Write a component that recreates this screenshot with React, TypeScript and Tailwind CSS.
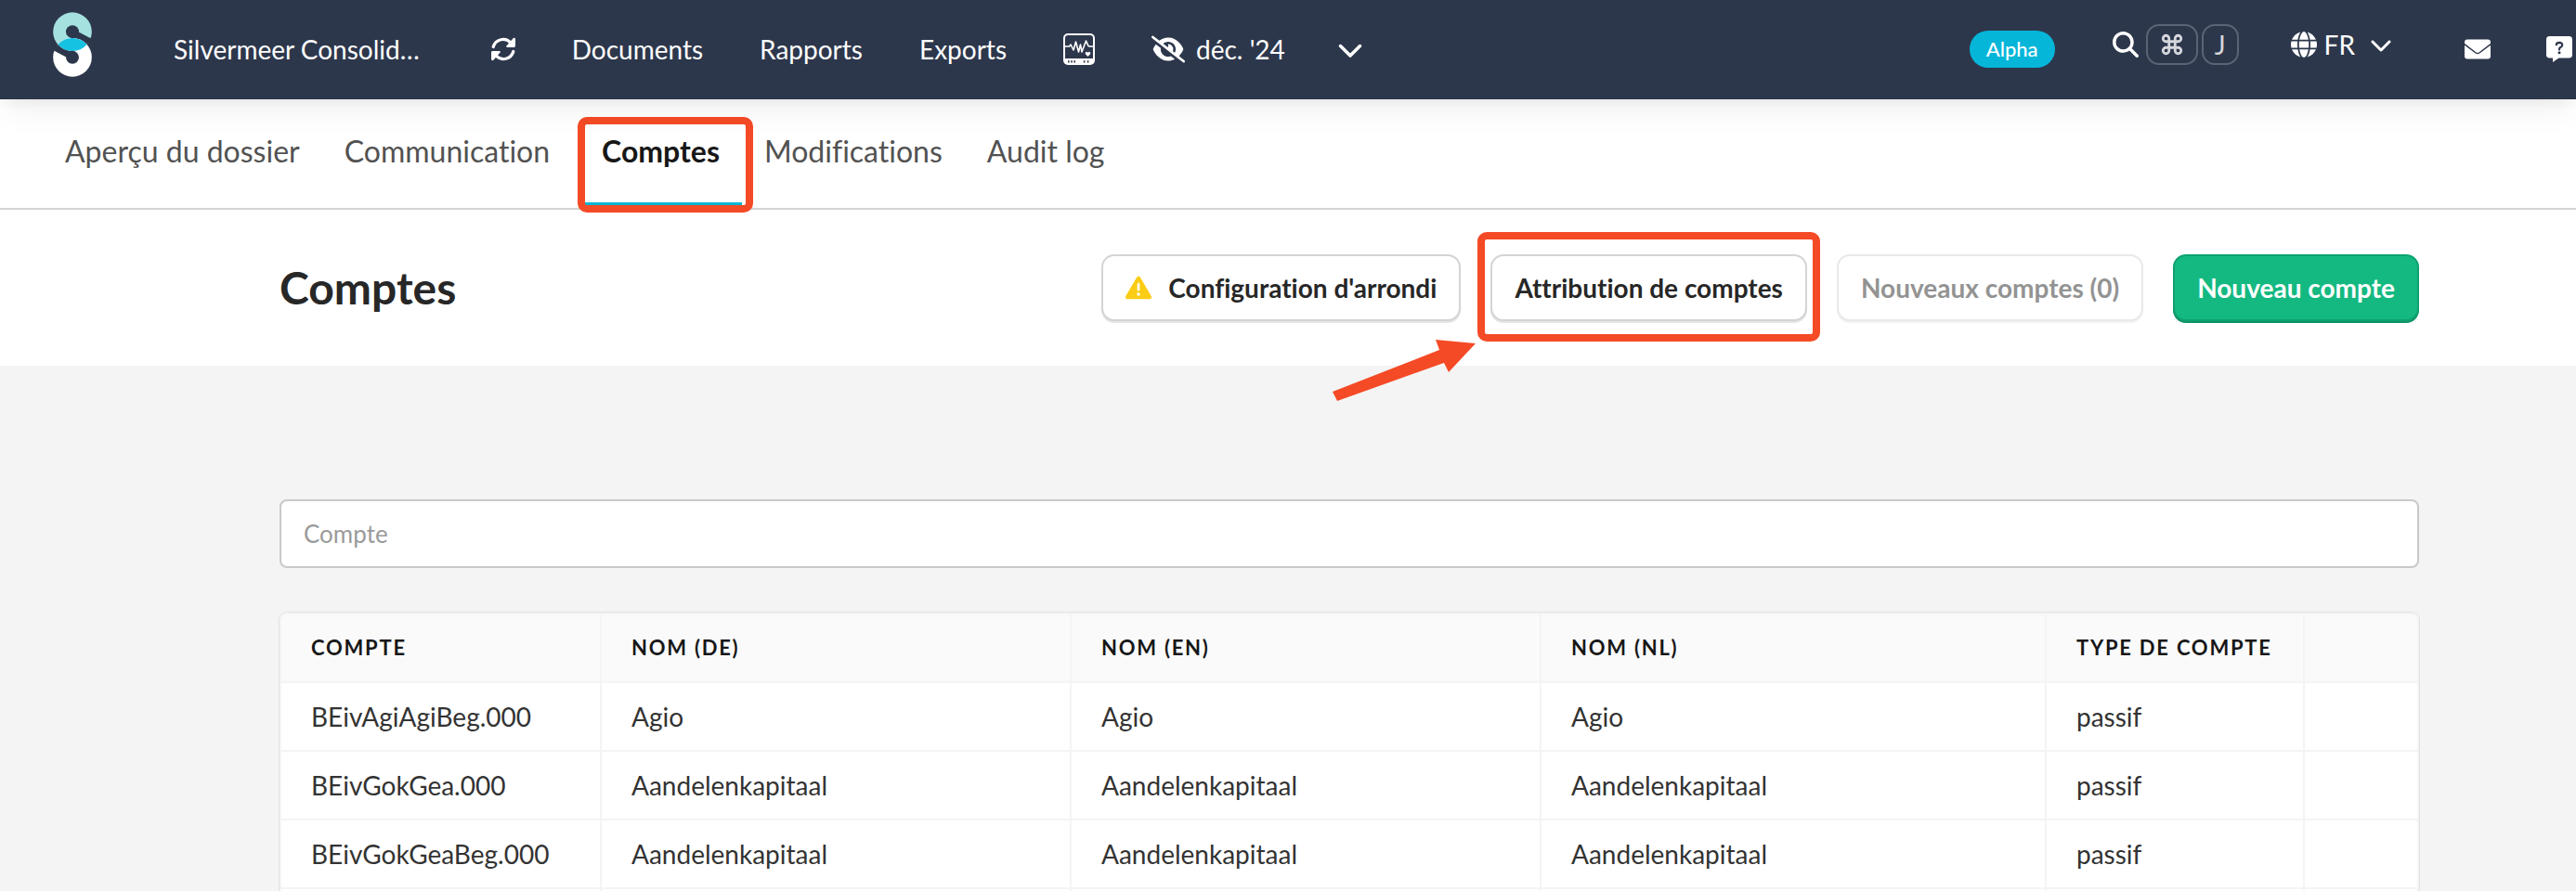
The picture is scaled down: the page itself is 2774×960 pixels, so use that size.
import type { ReactNode } from 'react'
import clsx from 'clsx'
import { Command } from 'lucide-react'
import { FaChevronDown, FaEyeSlash, FaGlobe, FaMagnifyingGlass, FaTriangleExclamation } from 'react-icons/fa6'

const tabs = ['Aperçu du dossier', 'Communication', 'Comptes', 'Modifications', 'Audit log']

const columns = [
  { label: 'Compte', width: 'w-[345px]' },
  { label: 'Nom (de)', width: 'w-[506px]' },
  { label: 'Nom (en)', width: 'w-[506px]' },
  { label: 'Nom (nl)', width: 'w-[544px]' },
  { label: 'Type de compte', width: 'w-[278px]' },
  { label: '', width: 'w-[121px]' },
]

const rows = [
  ['BEivAgiAgiBeg.000', 'Agio', 'Agio', 'Agio', 'passif', ''],
  ['BEivGokGea.000', 'Aandelenkapitaal', 'Aandelenkapitaal', 'Aandelenkapitaal', 'passif', ''],
  ['BEivGokGeaBeg.000', 'Aandelenkapitaal', 'Aandelenkapitaal', 'Aandelenkapitaal', 'passif', ''],
  ['', '', '', '', '', ''],
]

function Logo() {
  return (
    <svg viewBox="81 39 126 209" className="h-[70px] w-[42px]" aria-hidden="true">
      <circle cx="144" cy="102" r="62.5" fill="#a5e1de" />
      <path d="M160 101 L208 126 L190.7 143.5 A62.5 62.5 0 0 0 144 122.5 Z" fill="#2d374c" />
      <circle cx="144" cy="185" r="62.5" fill="#fff" />
      <path d="M128 186 L80 161 L97.3 143.5 A62.5 62.5 0 0 0 144 164.5 Z" fill="#2d374c" />
      <path d="M97.3 143.5 A62.5 62.5 0 0 1 190.7 143.5 A62.5 62.5 0 0 1 97.3 143.5 Z" fill="#15c2e2" />
      <circle cx="144" cy="102" r="21" fill="#2d374c" />
      <circle cx="144" cy="185" r="21" fill="#2d374c" />
    </svg>
  )
}

function RefreshIcon() {
  return (
    <svg viewBox="0 0 26 26" className="h-[26px] w-[26px]" aria-hidden="true">
      <g fill="none" stroke="#fff" strokeWidth="3.2" strokeLinecap="round" strokeLinejoin="round">
        <path d="M2.2 10.5 A11 11 0 0 1 21 6.2" />
        <path d="M23.8 15.5 A11 11 0 0 1 5 19.8" />
      </g>
      <g fill="#fff">
        <path d="M24.5 .8 Q26 .8 26 2.2 V9.6 Q26 11 24.6 11 H17.2 Q15.4 10.8 16.4 9.4 L23.4 1.4 Z" />
        <path d="M1.5 25.2 Q0 25.2 0 23.8 V16.4 Q0 15 1.4 15 H8.8 Q10.6 15.2 9.6 16.6 L2.6 24.6 Z" />
      </g>
    </svg>
  )
}

function MonitorIcon() {
  return (
    <svg viewBox="0 0 34 34" className="h-[34px] w-[34px]" aria-hidden="true">
      <rect x="1" y="1" width="32" height="32" rx="4" fill="none" stroke="#fff" strokeWidth="2" />
      <path d="M1 27 H33 V30 Q33 33 30 33 H4 Q1 33 1 30 Z" fill="#fff" />
      <path d="M2 14 H6.5 L8 12 L11 18 L13.5 9 L16.5 20 L18.5 12 L20 20 L24.5 8 L27 13.5 L28.5 14 H32" fill="none" stroke="#fff" strokeWidth="1.6" strokeLinejoin="round" />
      <path d="M26.5 25 L23.9 22.3 Q23 20.4 24.8 19.9 Q26 19.7 26.5 20.9 Q27 19.7 28.2 19.9 Q30 20.4 29.1 22.3 Z" fill="#fff" />
      <path d="M5.8 29.2 V31.4 M9 29.2 V31.4 M12.2 29.2 V31.4 M22.6 29.2 V31.4 M26.6 29.2 V31.4" stroke="#2d374c" strokeWidth="1.6" />
    </svg>
  )
}

function EnvelopeIcon() {
  return (
    <svg viewBox="0 0 28 22" className="h-[22px] w-7" aria-hidden="true">
      <rect y=".5" width="28" height="21" rx="3" fill="#fff" />
      <path d="M-1 5 L12.2 15 Q14 16.2 15.8 15 L29 5" fill="none" stroke="#2d374c" strokeWidth="1.5" />
    </svg>
  )
}

function HelpIcon() {
  return (
    <svg viewBox="0 0 28 28" className="h-7 w-7" aria-hidden="true">
      <path d="M3.5 0 H24.5 Q28 0 28 3.5 V20 Q28 23.4 24.5 23.4 H13.5 L7 28 V23.4 H3.5 Q0 23.4 0 20 V3.5 Q0 0 3.5 0 Z" fill="#fff" />
      <path d="M10.8 9.2 Q11.2 6.8 14 6.8 Q17.3 6.9 17.2 9.6 Q17 11.2 15.2 12 Q14 12.6 14 14.4" fill="none" stroke="#2d374c" strokeWidth="2.2" strokeLinecap="round" />
      <circle cx="14" cy="17.8" r="1.5" fill="#2d374c" />
    </svg>
  )
}

// Orange frame drawn around a highlighted control
function Highlight({ className }: { className: string }) {
  return <span className={clsx('pointer-events-none absolute rounded-[10px] border-8 border-[#f54a26]', className)} />
}

function Key({ className, children }: { className: string; children: ReactNode }) {
  return (
    <kbd className={clsx('flex h-11 items-center justify-center rounded-[14px] border-2 border-[#5b6475] font-[Lato,sans-serif] text-[28px] leading-8 text-[#d5d7db]', className)}>
      {children}
    </kbd>
  )
}

const buttonBase = 'flex h-[72px] items-center rounded-[14px] border-2 px-6 font-bold whitespace-nowrap'
const buttonDefault = 'border-[#d4d4d4] bg-white text-[#272727] shadow-[0_2px_0_#e5e5e5]'

function Header() {
  return (
    <header className="relative z-10 flex h-[107px] shrink-0 items-center bg-[#2d374c] pr-1 pb-0.5 pl-[57px] whitespace-nowrap text-white shadow-[0_20px_30px_-6px_rgba(0,0,0,0.05),0_8px_12px_-4px_rgba(0,0,0,0.05)]">
      <a href="#" aria-label="Silverfin" className="mb-2.5"><Logo /></a>
      <a href="#" className="ml-[88px]">Silvermeer Consolid…</a>
      <nav className="ml-[77px] flex items-center gap-[61px]">
        <button type="button" aria-label="Actualiser"><RefreshIcon /></button>
        <a href="#">Documents</a>
        <a href="#">Rapports</a>
        <a href="#">Exports</a>
        <a href="#" aria-label="Moniteur"><MonitorIcon /></a>
        <button type="button" className="flex items-center gap-3">
          <FaEyeSlash className="h-9 w-9" />
          déc. '24
          <FaChevronDown className="ml-11 h-7 w-7" />
        </button>
      </nav>
      <div className="ml-auto flex items-center">
        <span className="rounded-[20px] bg-[#06b6d9] px-[18px] py-1 text-[22px] leading-8 font-medium">Alpha</span>
        <button type="button" aria-label="Rechercher" className="mb-2.5 ml-[62px] flex items-center gap-1">
          <FaMagnifyingGlass className="mr-1 h-7 w-7" />
          <Key className="w-14"><Command className="h-[26px] w-[26px]" strokeWidth={2.6} /></Key>
          <Key className="w-10">J</Key>
        </button>
        <button type="button" className="mb-2.5 ml-14 flex items-center">
          <FaGlobe className="mr-2 h-7 w-7" />
          FR
          <FaChevronDown className="ml-4 h-6 w-6" />
        </button>
        <a href="#" aria-label="Messages" className="ml-[78px]"><EnvelopeIcon /></a>
        <a href="#" aria-label="Aide" className="ml-[60px]"><HelpIcon /></a>
      </div>
    </header>
  )
}

export default function App() {
  return (
    <div className="flex h-screen flex-col overflow-hidden bg-[#f4f4f4] font-[Lato,sans-serif] text-[28px] leading-10 text-[#333] [font-variant-ligatures:none]">
      <Header />

      {/* Tabs */}
      <nav className="flex h-[119px] shrink-0 border-b-2 border-[#d4d4d5] bg-white pl-[46px] text-[32px]">
        {tabs.map((tab) => (
          <a
            key={tab}
            href="#"
            className={clsx('relative px-6 pt-9', tab === 'Comptes' ? 'mb-[3px] ml-2 border-b-3 border-[#06b6d4] font-bold text-[#171717]' : 'text-[#525252]')}
          >
            {tab}
            {tab === 'Comptes' && <Highlight className="top-[19px] -right-3 -bottom-[11px] -left-0.5" />}
          </a>
        ))}
      </nav>

      {/* Title and actions */}
      <section className="flex h-[168px] shrink-0 items-center justify-between bg-white pr-[169px] pl-[301px]">
        <h1 className="text-[48px] leading-[56px] font-bold text-[#272727]">Comptes</h1>
        <div className="flex gap-8">
          <button type="button" className={clsx(buttonBase, buttonDefault)}>
            <FaTriangleExclamation className="mr-[18px] h-7 w-7 text-[#facc15]" />
            Configuration d'arrondi
          </button>
          <div className="relative">
            <button type="button" className={clsx(buttonBase, buttonDefault)}>Attribution de comptes</button>
            <Highlight className="-top-6 -right-3.5 -bottom-[22px] -left-3.5" />
            <svg viewBox="0 0 154 66" className="absolute top-[92px] right-[calc(100%+16px)] h-[66px] w-[154px]" aria-hidden="true">
              <path d="M111 0 L154 4 L125 35 L120 25 L5 66 L0 56 L115 11 Z" fill="#f54a26" />
            </svg>
          </div>
          <button type="button" disabled className={clsx(buttonBase, 'border-[#e9e9e9] bg-white text-[#939393] shadow-[0_2px_0_#f2f2f2]')}>
            Nouveaux comptes (0)
          </button>
          <button type="button" className={clsx(buttonBase, 'border-[#0ea271] bg-[#14b981] text-white shadow-[0_2px_0_#0d9367]')}>
            Nouveau compte
          </button>
        </div>
      </section>

      {/* Accounts list */}
      <main className="pt-36 pr-[169px] pl-[301px]">
        <input
          type="text"
          aria-label="Compte"
          placeholder="Compte"
          className="block h-[74px] w-full rounded-lg border-2 border-[#c9c9c9] bg-white px-6 text-[26px] placeholder:text-[#9a9a9a]"
        />
        <div className="mt-12 overflow-hidden rounded-lg border-2 border-[#f4f4f4] shadow-[0_0_0_1px_#e2e2e2]">
          <table className="w-full table-fixed border-separate border-spacing-0 bg-white text-left">
            <thead className="bg-[#fafafa] text-[22px] tracking-[0.08em] text-[#171717] uppercase">
              <tr>
                {columns.map((column) => (
                  <th key={column.label} className={clsx('h-[74px] border-r-2 border-b-2 border-[#f4f4f4] px-8 font-bold last:border-r-0', column.width)}>
                    {column.label}
                  </th>
                ))}
              </tr>
            </thead>
            <tbody>
              {rows.map((row, i) => (
                <tr key={i}>
                  {row.map((cell, j) => (
                    <td key={j} className="h-[74px] border-r-2 border-b-2 border-[#f4f4f4] px-8 whitespace-nowrap last:border-r-0">{cell}</td>
                  ))}
                </tr>
              ))}
            </tbody>
          </table>
        </div>
      </main>
    </div>
  )
}
